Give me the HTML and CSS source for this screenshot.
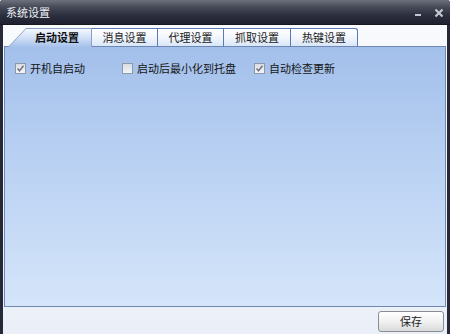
FILE: index.html
```html
<!DOCTYPE html>
<html lang="zh-CN">
<head>
<meta charset="utf-8">
<title>系统设置</title>
<link rel="stylesheet" href="styles.css">
</head>
<body>
<div class="window">
  <div class="titlebar">
    <span class="title">系统设置</span>
    <div class="controls">
      <svg class="ctl" width="10" height="10" viewBox="0 0 10 10"><rect x="2" y="6" width="6" height="2" fill="#c3c7d0"/></svg>
      <svg class="ctl" width="10" height="10" viewBox="0 0 10 10"><path d="M1.5 1.5 L8.5 8.5 M8.5 1.5 L1.5 8.5" stroke="#c3c7d0" stroke-width="2.2" fill="none"/></svg>
    </div>
  </div>
  <div class="client">
    <div class="tabs">
      <div class="tab-active"><div class="tab-active-inner">启动设置</div></div>
      <div class="tab">消息设置</div>
      <div class="tab">代理设置</div>
      <div class="tab">抓取设置</div>
      <div class="tab">热键设置</div>
    </div>
    <div class="panel">
      <div class="options">
        <label class="opt"><span class="box checked"><svg width="9" height="9" viewBox="0 0 9 9"><path d="M1.5 4.5 L3.5 6.8 L7.5 1.8" stroke="#707478" stroke-width="1.4" fill="none"/></svg></span>开机自启动</label>
        <label class="opt"><span class="box"></span>启动后最小化到托盘</label>
        <label class="opt"><span class="box checked"><svg width="9" height="9" viewBox="0 0 9 9"><path d="M1.5 4.5 L3.5 6.8 L7.5 1.8" stroke="#707478" stroke-width="1.4" fill="none"/></svg></span>自动检查更新</label>
      </div>
    </div>
    <div class="footer">
      <button class="btn">保存</button>
    </div>
  </div>
</div>
</body>
</html>
```

FILE: styles.css
```css
* { box-sizing: border-box; }
html, body { margin: 0; padding: 0; }
body {
  width: 450px;
  height: 334px;
  overflow: hidden;
  font-family: "Noto Sans CJK SC", "Noto Sans", sans-serif;
  font-size: 11px;
  color: #1a1a1a;
}
.window {
  width: 450px;
  height: 334px;
  display: flex;
  flex-direction: column;
  background: #262937;
  border-radius: 3px 3px 0 0;
}
.titlebar {
  height: 25px;
  flex: none;
  display: flex;
  align-items: center;
  justify-content: space-between;
  padding: 0 6px 0 6px;
  background: linear-gradient(#6d717d 0%, #464a58 30%, #2b2e3d 65%, #1e2030 100%);
  border-radius: 3px 3px 0 0;
  border-bottom: 1px solid #15171f;
}
.title {
  color: #eef0f5;
  line-height: 14px;
  margin-top: -1px;
}
.controls {
  display: flex;
  gap: 11px;
  align-items: center;
  margin-top: 2px;
}
.ctl { display: block; }
.client {
  flex: 1;
  margin: 0 3px;
  display: flex;
  flex-direction: column;
  background: linear-gradient(#f8fafd, #ebf0f8);
}
.tabs {
  display: flex;
  padding: 3px 0 0 5px;
  height: 21px;
  flex: none;
}
.tab-active {
  position: relative;
  z-index: 1;
  width: 84px;
  height: 19px;
  margin-bottom: -1px;
  background: #8aa0c6;
  clip-path: polygon(0 100%, 18px 0, 100% 0, 100% 100%);
  padding: 1px 1px 0 1px;
}
.tab-active-inner {
  height: 100%;
  background: linear-gradient(#f4f8fe, #cddcf4 55%, #a5c1eb);
  clip-path: polygon(0 100%, 17px 0, 100% 0, 100% 100%);
  font-weight: bold;
  display: flex;
  align-items: center;
  justify-content: center;
  padding: 0 0 2px 14px;
  color: #101010;
}
.tab {
  width: 66px;
  height: 18px;
  border: 1px solid #5b7bb0;
  border-left: none;
  border-bottom: none;
  background: linear-gradient(#ffffff, #f2f6fc 50%, #d9e6f8);
  display: flex;
  align-items: center;
  justify-content: center;
  padding-bottom: 2px;
  color: #1a1a1a;
}
.tab:nth-child(4), .tab:nth-child(5) { width: 67px; }
.tab:last-child { border-radius: 0 3px 0 0; }
.panel {
  flex: 1;
  margin: 0 1px;
  border: 1px solid #7089b4;
  background: linear-gradient(#a3c0eb, #bcd3f3 50%, #d5e5fa);
  padding: 15px 0 0 10px;
}
.options {
  display: grid;
  grid-template-columns: 107px 132px auto;
  align-items: center;
}
.opt {
  display: flex;
  align-items: center;
  gap: 4px;
  line-height: 13px;
  color: #141414;
}
.box {
  width: 11px;
  height: 11px;
  border: 1px solid #8d99aa;
  background: linear-gradient(#d9dde3, #f4f5f7);
  display: flex;
  align-items: center;
  justify-content: center;
}
.footer {
  height: 27px;
  flex: none;
  display: flex;
  justify-content: flex-end;
  align-items: flex-start;
  padding: 4px 3px 0 0;
}
.btn {
  width: 66px;
  height: 21px;
  border: 1px solid #8a8c90;
  border-radius: 3px;
  background: linear-gradient(#ffffff, #f1f1f1 50%, #d9dadc);
  font-family: "Noto Sans CJK SC", "Noto Sans", sans-serif;
  font-size: 11px;
  color: #1e1e1e;
  padding: 0 0 1px 0;
}
```
